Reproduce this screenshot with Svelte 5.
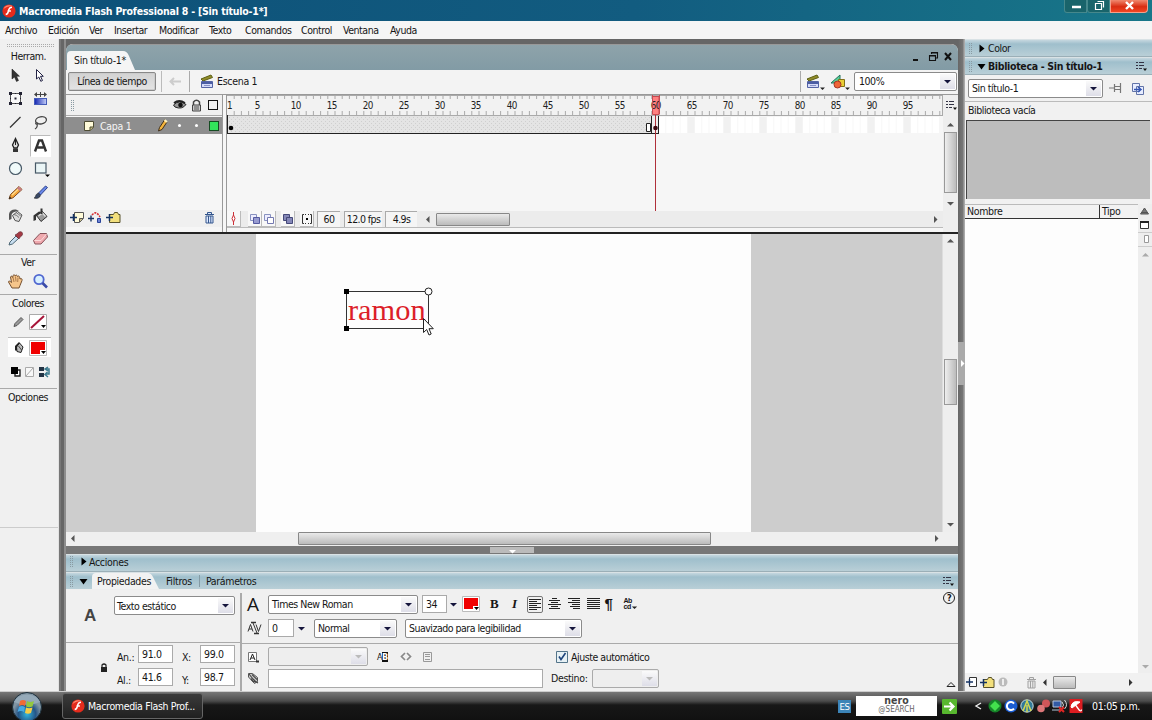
<script>
  const menus = ['Archivo', 'Edición', 'Ver', 'Insertar', 'Modificar', 'Texto', 'Comandos', 'Control', 'Ventana', 'Ayuda'];
  const tools = ['arrow', 'subarrow', 'transform', 'gradient', 'line', 'lasso', 'pen', 'text', 'oval', 'rect', 'pencil', 'brush', 'ink', 'bucket', 'dropper', 'eraser'];
  const alignLines = {
    left: 'M0 .5h12M0 2.500h8M0 4.500h12M0 6.500h8M0 8.500h12M0 10.500h8',
    center: 'M4 .5h5M1 2.500h11M3 4.500h7M0 6.500h13M3 8.500h7M1 10.500h11',
    right: 'M0 .5h12M4 2.500h8M0 4.500h12M4 6.500h8M2 8.500h10M5 10.500h7',
    justify: 'M0 .5h13M0 2.500h13M0 4.500h13M0 6.500h13M0 8.500h13M0 10.500h13'
  };
  const frameWidth = 7.2;
  const ticks = Array.from({ length: 99 }, (_, i) => (i + 1) * frameWidth);
  const labels = [1, ...Array.from({ length: 19 }, (_, i) => (i + 1) * 5)];
  const emptyFrames = Array.from({ length: 39 }, (_, i) => i + 61);
</script>

{#snippet icon(name)}
  {#if name === 'flash'}
    <svg width="14" height="14" viewBox="0 0 14 14"><circle cx="7" cy="7" r="6.6" fill="#e32b1c" /><path d="M1.500 5a6 5 0 0 1 9-3C7 2 4 3 1.500 5z" fill="#ff8a70" /><path d="M10 3.200c-3 0-3.200 2-3.700 4.300C6 9 5.500 10.300 3.700 10.600M5.500 6.900h3.400" fill="none" stroke="#fff" stroke-width="1.500" /></svg>
  {:else if name === 'arrow'}
    <svg width="17" height="17" viewBox="0 0 17 17"><path d="M5 2v10l2.500-2 2 4.500 2-1-2-4.300h3z" fill="#333" stroke="#111" stroke-width=".5" /></svg>
  {:else if name === 'subarrow'}
    <svg width="17" height="17" viewBox="0 0 17 17"><path d="M4.500 2.500v9.500l2.300-2 2 4.300 1.700-.8-2-4.200h2.800z" fill="#fff" stroke="#224" /></svg>
  {:else if name === 'transform'}
    <svg width="17" height="17" viewBox="0 0 17 17"><rect x="3.500" y="3.500" width="10" height="10" fill="#f8f8f8" stroke="#555" /><path d="M2 2h3v3H2zM8 3h1v1H8zM12 2h3v3h-3zM3 8h1v1H3zM13 8h1v1h-1zM2 12h3v3H2zM8 13h1v1H8zM12 12h3v3h-3zM7.500 7.500h2v2h-2z" fill="#223" /></svg>
  {:else if name === 'gradient'}
    <svg width="17" height="17" viewBox="0 0 17 17"><defs><linearGradient id="blue"><stop stop-color="#1224b0" /><stop offset="1" stop-color="#c5cff8" /></linearGradient></defs><path d="M2 4.500l3-2.500v5zM15 4.500L12 2v5zM5 4h7v1H5zM8 2h1v5H8z" fill="#444" /><rect x="2.500" y="8.500" width="12" height="6" fill="url(#blue)" stroke="#445bb8" /></svg>
  {:else if name === 'line'}
    <svg width="17" height="17" viewBox="0 0 17 17"><path d="M3 13.500L13.500 3" stroke="#333" stroke-width="1.300" /></svg>
  {:else if name === 'lasso'}
    <svg width="17" height="17" viewBox="0 0 17 17"><ellipse cx="9" cy="6.300" rx="5.500" ry="3.600" transform="rotate(-12 9 6.300)" fill="none" stroke="#444" stroke-width="1.300" /><path d="M4 8.500c-1.500 2 2.500 2.500 1.500 0M5 10c1 3-.5 4-2 5" fill="none" stroke="#444" stroke-width="1.200" /></svg>
  {:else if name === 'pen'}
    <svg width="17" height="17" viewBox="0 0 17 17"><path d="M8.500 1.500L5.500 8l1.500 3h3l1.500-3z" fill="#ddd" stroke="#222" stroke-width="1.300" /><path d="M8.500 3v5" stroke="#222" /><path d="M6 11.500h5V15H6z" fill="#333" /></svg>
  {:else if name === 'text'}
    <svg width="17" height="17" viewBox="0 0 17 17"><path d="M3 14.500L7 3.500h3l4 11M5.500 10.500h6" fill="none" stroke="#333" stroke-width="2.400" /></svg>
  {:else if name === 'oval'}
    <svg width="17" height="17" viewBox="0 0 17 17"><circle cx="8.500" cy="8.500" r="6" fill="#f0fafa" stroke="#465866" stroke-width="1.200" /></svg>
  {:else if name === 'rect'}
    <svg width="20" height="17" viewBox="0 0 20 17"><rect x="4.500" y="3" width="10.500" height="10" fill="#eaf5f6" stroke="#465866" stroke-width="1.200" /><path d="M14 14.500h5L16.500 17z" fill="#000" /></svg>
  {:else if name === 'pencil'}
    <svg width="17" height="17" viewBox="0 0 17 17"><path d="M2 15l1.500-4.500L12 2.500l3 3-9 8.300z" fill="#f4a43a" stroke="#7e4c22" /><path d="M5 11l8-7.500" stroke="#ffdf92" stroke-width="1.200" /><path d="M12 2.500l3 3-2 1.800-3-3z" fill="#c77e85" /><path d="M2 15l.8-2.400 1.700 1.700z" fill="#222" /></svg>
  {:else if name === 'brush'}
    <svg width="17" height="17" viewBox="0 0 17 17"><path d="M6.500 9L13.500 2l2 1.500-7 7.500z" fill="#6887e8" stroke="#2f438c" /><path d="M2 14c2-.500 1-4 4.500-5l2 2.200C8 14 5 15 2 14z" fill="#394966" stroke="#222" stroke-width=".6" /></svg>
  {:else if name === 'ink'}
    <svg width="17" height="17" viewBox="0 0 17 17"><path d="M5.500 8.500l5-4 4.500 3.500-3 6.500-4-1z" fill="#ddd" stroke="#555" /><path d="M2 13V7q1-5 7-4.500l3 1.500-3 .5Q5 5 4.500 8v4z" fill="#555" /><path d="M7 7.500q3 .5 5 3M9.500 6q2 .5 4 3" fill="none" stroke="#777" /></svg>
  {:else if name === 'bucket'}
    <svg width="17" height="17" viewBox="0 0 17 17"><path d="M4.500 8.500l6-4 4.500 5-6 5z" fill="#999" stroke="#333" /><path d="M6.500 9l4-3 3 3.500" fill="none" stroke="#ddd" stroke-width="1.300" /><path d="M1.500 14V8.500L7 4.500l2 .5-5 4.500V13zM8.500 1.500h2V7h-2z" fill="#333" /></svg>
  {:else if name === 'dropper'}
    <svg width="17" height="17" viewBox="0 0 17 17"><path d="M2 15l1-3 6-6 2.500 2.500-6 5.500z" fill="#c8def0" stroke="#4c6674" /><path d="M8 5l2-1c2-3 5-3 5.500-.500.300 2-1.500 3-2.500 3.500l-1 2z" fill="#a43a45" stroke="#642b34" stroke-width=".7" /></svg>
  {:else if name === 'eraser'}
    <svg width="17" height="17" viewBox="0 0 17 17"><path d="M1.500 10.500l6.500-7h6.500L15.500 7 9 14H3z" fill="#efa9ae" stroke="#87535a" /><path d="M2.500 10.500H9l5.500-6.500" fill="none" stroke="#fbd9da" /></svg>
  {:else if name === 'hand'}
    <svg width="17" height="17" viewBox="0 0 17 17"><path d="M5 15L1.500 9c0-1.500 1.500-1 3 .5L3.500 4c.5-1.300 1.700-1 2.200.500L6 2.500c.8-1 2-.7 2.200.500.700-1.500 2-1 2.300.500 1-1 2-.5 2.200 1L13 6c1.500-1 2.400 0 2 1.500L13 12.500 12 15z" fill="#f6c58a" stroke="#755030" /><path d="M6 4.500L7 9M8.500 3.500L9 8.500M11 4.500L10.700 9" stroke="#9b6a3e" stroke-width=".8" /></svg>
  {:else if name === 'zoom'}
    <svg width="17" height="17" viewBox="0 0 17 17"><circle cx="7" cy="6.500" r="4.700" fill="#d7f0ff" stroke="#5067d0" stroke-width="1.800" /><path d="M10.500 10l4.500 4.500" stroke="#3a4ba8" stroke-width="2.600" /></svg>
  {:else if name === 'stroke'}
    <svg width="17" height="17" viewBox="0 0 17 17"><path d="M6 13.500l1-3 6-6 2 2-6 6z" fill="#999" stroke="#555" /></svg>
  {:else if name === 'fill'}
    <svg width="17" height="17" viewBox="0 0 17 17"><path d="M8.500 8l3-4 3.500 4-2 5.500-4-1z" fill="#bbb" stroke="#222" /><path d="M7 11.500V7l4-4 1 1-3 3.500v4z" fill="#222" /><path d="M10.500 7l3 4" stroke="#444" /></svg>
  {:else if name === 'swapbw'}
    <svg width="12" height="12" viewBox="0 0 12 12"><path d="M5 4h5v6H5z" fill="#fff" stroke="#222" stroke-width="1.400" /><path d="M1 1h7v7H1z" /></svg>
  {:else if name === 'nocolor'}
    <svg width="12" height="12" viewBox="0 0 12 12"><path d="M1.500 1.500h8v9h-8zM2 10l7-8" fill="#f8f8f8" stroke="#aaa" /></svg>
  {:else if name === 'swap'}
    <svg width="14" height="12" viewBox="0 0 14 12"><path d="M1 1h5v4H1zM1 7h5v4H1z" fill="#234" /><path d="M7 3h4v5H8M10 1L7 3l3 2M9.500 6L7 8.500 10 11" fill="none" stroke="#3b7a8e" stroke-width="1.500" /></svg>
  {:else if name === 'scene'}
    <svg width="14" height="15" viewBox="0 0 14 15"><path d="M1 5L11 1l1.500 2.500L3 7z" fill="#928c2a" stroke="#5c6015" /><path d="M1.500 7.500h11v6h-11z" fill="#d4daf8" stroke="#5362a4" /><path d="M1.500 8h11v2h-11z" fill="#4b5da3" /><path d="M4 11.500h6" stroke="#8790c5" /></svg>
  {:else if name === 'symbols'}
    <svg width="17" height="15" viewBox="0 0 17 15"><path d="M1 9l9-8v8z" fill="#58cf98" stroke="#24735b" /><path d="M8.500 5.500h6v7h-6z" fill="#e9cd35" stroke="#817019" /><circle cx="7.500" cy="10.500" r="3.500" fill="#ef6738" stroke="#a33525" /></svg>
  {:else if name === 'eye'}
    <svg width="14" height="10" viewBox="0 0 14 10"><path d="M.5 5Q6-1 13 4.500 9 10 2 7z" fill="#999" stroke="#222" /><path d="M1 3Q6-1 12 3" fill="none" stroke="#222" stroke-width="1.800" /><circle cx="7.500" cy="5" r="2.300" fill="#111" /></svg>
  {:else if name === 'lock'}
    <svg width="11" height="13" viewBox="0 0 11 13"><path d="M2.500 6V3q3-3.500 6 0v3" fill="#eee" stroke="#444" stroke-width="1.500" /><path d="M1.500 6h8v6h-8z" fill="#ccc" stroke="#444" /><path d="M3 8h5M3 10h5" stroke="#555" /></svg>
  {:else if name === 'minilock'}
    <svg width="8" height="9" viewBox="0 0 8 9"><path d="M2 4V2q2-2 4 0v2" fill="none" stroke="#222" stroke-width="1.200" /><path d="M1 4h6v5H1z" fill="#222" /></svg>
  {:else if name === 'page'}
    <svg width="12" height="12" viewBox="0 0 12 12"><path d="M1.500 1.500h9v6l-3.500 3h-5.500z" fill="#fffbd9" stroke="#4e4c34" /><path d="M7 10.500V7h3.500" fill="#bbb27d" stroke="#4e4c34" /></svg>
  {:else if name === 'minipencil'}
    <svg width="11" height="13" viewBox="0 0 11 13"><path d="M1.500 12L2.500 8.500 7.500 1l2.500 2-5 7.500z" fill="#f2b33c" stroke="#40301c" /><path d="M7.500 1l2.500 2" stroke="#fff4be" stroke-width="2" /></svg>
  {:else if name === 'addlayer'}
    <svg width="15" height="13" viewBox="0 0 15 13"><path d="M4.500 1.500h9v6l-4 4h-5z" fill="#fffbd9" stroke="#555" /><path d="M9.500 11V7.500H13" fill="#c4bc8a" stroke="#555" /><path d="M0 6.500h7M3.500 3v7" stroke="#143262" stroke-width="1.500" /></svg>
  {:else if name === 'guide'}
    <svg width="15" height="13" viewBox="0 0 15 13"><path d="M4 4q4-5 8 2" fill="none" stroke="#d52c32" stroke-width="1.600" stroke-dasharray="2 1" /><path d="M0 7.500h6M3 4.500v6" stroke="#143262" stroke-width="1.400" /><path d="M9.500 7.500h3v4h-3z" fill="#6f84d3" stroke="#28439b" /></svg>
  {:else if name === 'addfolder'}
    <svg width="15" height="13" viewBox="0 0 15 13"><path d="M3.500 3.500h4l1-2h3l1 2h1.500v8H3.500z" fill="#f2df7c" stroke="#57502a" /><path d="M0 6.500h7M3.500 3v7" stroke="#143262" stroke-width="1.500" /></svg>
  {:else if name === 'trash'}
    <svg width="11" height="13" viewBox="0 0 11 13"><path d="M1 3.500h9M3.500 3V1.500h4V3M2 5h7v7H2zM4.500 5v7M6.800 5v7" fill="#dce8ff" stroke="#34568d" /></svg>
  {:else if name === 'onion'}
    <svg width="12" height="12" viewBox="0 0 12 12"><path d="M1.500 1.500h6v6h-6z" fill="#eef" stroke="#8992c0" /><path d="M4.500 4.500h6v6h-6z" fill="#979bd0" stroke="#5459a0" /></svg>
  {:else if name === 'onionoutline'}
    <svg width="12" height="12" viewBox="0 0 12 12"><path d="M1.500 1.500h6v6h-6z" fill="#eef" stroke="#8992c0" /><path d="M4.500 4.500h6v6h-6z" fill="#fff" stroke="#7479b0" /></svg>
  {:else if name === 'multiframe'}
    <svg width="12" height="12" viewBox="0 0 12 12"><path d="M1.500 1.500h6v6h-6z" fill="#8588b8" stroke="#454979" /><path d="M4.500 4.500h6v6h-6z" fill="#8588b8" stroke="#454979" /></svg>
  {:else if name === 'markers'}
    <svg width="12" height="12" viewBox="0 0 12 12"><path d="M3 1.500H1.500v9H3M9 1.500h1.500v9H9M4 1.500h1M7 1.500h1M4 10.500h1M7 10.500h1" fill="none" stroke="#333" /><path d="M5 5h2v2H5z" /></svg>
  {:else if name === 'centerframe'}
    <svg width="9" height="13" viewBox="0 0 9 13"><path d="M4.500 0v4M4.500 9v4" stroke="#cc3038" /><path d="M4.500 3L6 6.500 4.500 10 3 6.500z" fill="#fff" stroke="#cc3038" /></svg>
  {:else if name === 'options'}
    <svg width="12" height="11" viewBox="0 0 12 11"><path d="M1 1.500h2M4 1.500h5M1 4.500h2M4 4.500h5M1 7.500h2M4 7.500h3" stroke="#334" /><path d="M8 7.500h4L10 10z" fill="#111" /></svg>
  {:else if alignLines[name]}
    <svg width="13" height="12" viewBox="0 0 13 12"><path d={alignLines[name]} stroke="#222" /></svg>
  {:else if name === 'tracking'}
    <svg width="15" height="16" viewBox="0 0 15 16"><path d="M1 11.500l2.500-7 2.500 7M2 9h3M9 4.500l2.500 7 2.500-7M6 3l4 10" fill="none" stroke="#333" /><path d="M4 2.500h5M7 13.500h5" stroke="#333" stroke-width="1.400" /></svg>
  {:else if name === 'charposition'}
    <svg width="12" height="12" viewBox="0 0 12 12"><path d="M1.500 1.500h8v9h-8z" fill="#fff" stroke="#777" /><path d="M3 9l2.500-6L8 9M4 7h3" fill="none" stroke="#222" /><path d="M9 9.500h3v2H9z" fill="#333" /></svg>
  {:else if name === 'link'}
    <svg width="13" height="13" viewBox="0 0 13 13"><path d="M1.500 5V1.500h4l5 4v4l-3 2z" fill="#ccc" stroke="#555" /><path d="M2 2l4 5q3 3 5 4M5 2.500l5 5M4 6.500q2 4 5 3.500" fill="none" stroke="#444" stroke-width="1.100" /></svg>
  {:else if name === 'code'}
    <svg width="12" height="9" viewBox="0 0 12 9"><path d="M5 1L1.500 4.500 5 8M7 1l3.500 3.500L7 8" fill="none" stroke="#888" stroke-width="1.700" /></svg>
  {:else if name === 'border'}
    <svg width="11" height="12" viewBox="0 0 11 12"><path d="M1.500 1.500h8v9h-8zM3 3.500h5M3 5.500h5M3 8.500h5" fill="none" stroke="#999" /></svg>
  {:else if name === 'pin'}
    <svg width="14" height="12" viewBox="0 0 14 12"><path d="M0 6h5M5.500 2v8M6 4.500h5M6 7.500h5M11.500 1v10" stroke="#777" stroke-width="1.200" /></svg>
  {:else if name === 'newlib'}
    <svg width="14" height="13" viewBox="0 0 14 13"><path d="M1.500 1.500h7v8h-7zM5.500 4.500h7v8h-7z" fill="#e7edff" stroke="#6274a8" /><path d="M3 7.500h6M7 5l3 2.500L7 10" fill="none" stroke="#3355b4" stroke-width="1.500" /></svg>
  {:else if name === 'newsymbol'}
    <svg width="12" height="12" viewBox="0 0 12 12"><path d="M3.500 1.500h7v9h-7z" fill="#fff" stroke="#333" /><path d="M0 6h7M3.500 3v6" fill="none" stroke="#143262" stroke-width="1.300" /></svg>
  {/if}
{/snippet}

{#snippet tri(dir, color = '#222')}
  <svg class="tri" width="9" height="9" viewBox="0 0 9 9"><path d={dir === 'down' ? 'M1 3h7L4.500 6.500z' : dir === 'up' ? 'M1 6.500h7L4.500 3z' : dir === 'left' ? 'M6.500 1v7L3 4.500z' : 'M3 1v7l3.500-3.500z'} fill={color} /></svg>
{/snippet}

{#snippet panelTri(dir)}
  <svg width="9" height="9" viewBox="0 0 9 9"><path d={dir === 'down' ? 'M.5 2h8L4.500 7.500z' : 'M2.500 .5v8L7.500 4.500z'} /></svg>
{/snippet}

{#snippet select(text, cls = '')}
  <div class="select {cls}"><span>{text}</span><i>{@render tri('down', cls.includes('off') ? '#bbb' : '#15153c')}</i></div>
{/snippet}

<div class="app">
  <header class="title">{@render icon('flash')}<b>Macromedia Flash Professional 8 - [Sin título-1*]</b>
    <div class="winbtns"><span><svg width="22" height="13"><path d="M7 7h9" stroke="#fff" stroke-width="2.500" /></svg></span><span><svg width="22" height="13"><path d="M7.500 3.500h6v6h-6zM9.500 1.500h6v6" fill="none" stroke="#fff" stroke-width="1.200" /></svg></span><span class="close"><svg width="36" height="13"><path d="M15 2l7 7M22 2l-7 7" stroke="#fff" stroke-width="2.400" /></svg></span></div>
  </header>
  <nav>{#each menus as m}<span>{m}</span>{/each}</nav>

  <main>
    <aside class="toolbox">
      <div class="dots"></div>
      <div class="cap">Herram.</div>
      <div class="tools">{#each tools as t}<div class:active={t === 'text'}>{@render icon(t)}</div>{/each}</div>
      <div class="cap sep ver">Ver</div>
      <div class="tools view"><div>{@render icon('hand')}</div><div>{@render icon('zoom')}</div></div>
      <div class="cap sep col">Colores</div>
      <div class="swrow"><div>{@render icon('stroke')}</div><svg width="18" height="16"><path d="M.5.5h17v15H.5z" fill="#fff" stroke="#aaa" /><path d="M2 14L15 2" stroke="#a71438" stroke-width="2" /><path d="M12 11h5l-2.500 3z" /></svg></div>
      <div class="swrow on"><div>{@render icon('fill')}</div><svg width="18" height="16"><path d="M.5.5h17v15H.5z" fill="#fff" stroke="#bbb" /><path d="M2 2h14v12H2z" fill="#f00000" /><path d="M11 10h6v5h-6z" fill="#fff" /><path d="M12 11h5l-2.500 3z" /></svg></div>
      <div class="swaps">{@render icon('swapbw')}{@render icon('nocolor')}{@render icon('swap')}</div>
      <div class="cap sep opt">Opciones</div>
      <div class="rest"></div>
    </aside>
    <div class="split"></div>

    <section class="center">
      <div class="doc">
        <div class="tabs"><span class="tab"><svg width="70" height="19"><path d="M0 19V4q0-4 4-4h52q4 0 6 5l6 14z" fill="#f5f5f5" /></svg><em>Sin título-1*</em></span>
          <svg class="docbtns" width="42" height="14"><path d="M2 10h5" stroke="#111" stroke-width="2" /><path d="M18.500 5.500h6v5h-6zM18 6h7M20.500 4V2.500h6V8H25M20 3h7" fill="none" stroke="#111" stroke-width="1.100" /><path d="M34 3l6 7M40 3l-6 7" stroke="#111" stroke-width="2" /></svg>
        </div>
        <div class="editbar"><span class="btn">Línea de tiempo</span><span class="back"><svg width="12" height="9"><path d="M12 4.500H3M5 1L1.500 4.500 5 8" fill="none" stroke="#ccc" stroke-width="2" /></svg></span><span class="scene">{@render icon('scene')}Escena 1</span><span class="grow"></span><span class="pick">{@render icon('scene')}<small>{@render tri('down')}</small></span><span class="pick two">{@render icon('symbols')}<small>{@render tri('down')}</small></span>{@render select('100%', 'zoomsel')}</div>

        <div class="timeline">
          <div class="layers">
            <div class="lhead"><i class="grip"></i><span>{@render icon('eye')}</span><span>{@render icon('lock')}</span><b class="sq"></b></div>
            <div class="layer">{@render icon('page')}<span>Capa 1</span>{@render icon('minipencil')}<u class="first"></u><u></u><b></b></div>
            <div class="lspace"></div>
            <div class="lfoot">{@render icon('addlayer')}{@render icon('guide')}{@render icon('addfolder')}<span></span>{@render icon('trash')}</div>
          </div>
          <div class="frames">
            <svg class="ruler" width="716" height="116" viewBox="0 0 716 116">
              <defs><pattern id="tween" width="4" height="4" patternUnits="userSpaceOnUse"><path d="M0 0h4v4H0z" fill="#e4e4e4" /><path d="M0 0h1v1H0zM2 2h1v1H2z" fill="#cfcfcf" /></pattern></defs>
              <path d="M0 0h716v20H0z" fill="#f2f2f2" />
              {#each ticks as x}<path d="M{x} 1v3M{x} 16v4" stroke="#aaa" />{/each}
              <path d="M0 .5h716M0 20.500h716M715.500 0v20" stroke="#aaa" />
              {#each emptyFrames as n}<path d="M{(n - 1) * frameWidth} 22h6.400v16h-6.400z" fill={n % 5 ? '#fff' : '#f1f1f1'} />{/each}
              <path d="M0 21h425v17H0z" fill="url(#tween)" /><path d="M0 38.500h432M.5 20v18M424.500 21v18M431.500 21v18" stroke="#222" />
              <path d="M425 21h6v17h-6z" fill="#eee" />
              <circle cx="4" cy="33" r="2.300" /><path d="M419.500 28.500h4v8h-4z" fill="#fff" stroke="#222" />
              <path d="M425.500 1.500h6.500v18h-6.500z" fill="#ff8080" stroke="#c64a50" />
              {#each labels as n}<text x={(n - 1) * frameWidth - (n === 1 ? 0 : 1)} y="13.500">{n}</text>{/each}
              <path d="M425 0h1v19h-1M432 0h1v19h-1" fill="#c64a50" /><path d="M428.500 20v96" stroke="#b0303a" /><circle cx="428.500" cy="33" r="2.300" fill="#3c0a10" />
            </svg>
            <div class="fstatus"><span class="fb first">{@render icon('centerframe')}</span><span class="fb on1">{@render icon('onion')}</span><span class="fb on2">{@render icon('onionoutline')}</span><span class="fb on3">{@render icon('multiframe')}</span><span class="fb on4">{@render icon('markers')}</span><span class="fv v1">60</span><span class="fv v2">12.0 fps</span><span class="fv v3">4.9s</span><div class="hs">{@render tri('left', '#555')}<i></i><span class="grow"></span>{@render tri('right', '#555')}</div></div>
          </div>
          <div class="tscroll"><span>{@render icon('options')}</span>{@render tri('up', '#555')}<i></i>{@render tri('down', '#555')}</div>
        </div>

        <div class="work">
          <div class="pasteboard"><div class="page"><div class="textbox">ramon<svg width="92" height="52" viewBox="0 0 92 52"><path d="M3.500 4.500h82v37h-82z" fill="none" stroke="#333" /><path d="M1 2h5v5H1zM1 39h5v5H1z" /><circle cx="85.500" cy="4.500" r="3.500" fill="#fff" stroke="#222" /><path d="M80.500 31.500v14l3.200-3 2.300 5.500 2.200-1-2.200-5.300h4.300z" fill="#fff" stroke="#222" /></svg></div></div></div>
          <div class="vs">{@render tri('up', '#555')}<span></span><i></i><span class="grow"></span>{@render tri('down', '#555')}</div>
        </div>
        <div class="hscroll">{@render tri('left', '#555')}<i></i><span class="grow"></span>{@render tri('right', '#555')}</div>
      </div>
      <div class="collapse"><span>{@render tri('down', '#fff')}</span></div>

      <div class="props">
        <div class="bar acc"><i class="grip"></i>{@render panelTri('right')}<span>Acciones</span></div>
        <div class="bar ptabs"><i class="grip"></i>{@render panelTri('down')}<span class="ptab"><svg width="68" height="17"><path d="M0 17V5q0-4 4-4h52q3 0 5 4l6 12z" fill="#f2f2f2" /></svg><em>Propiedades</em></span><span class="t2">Filtros</span><span class="t3">Parámetros</span><span class="grow"></span>{@render icon('options')}</div>
        <div class="pbody">
          <div class="pleft">
            <div class="kind"><b>A</b>{@render select('Texto estático', 'kindsel')}</div>
            <div class="dims"><span class="lk">{@render icon('minilock')}</span><label>An.:</label><div class="inp">91.0</div><label>X:</label><div class="inp">99.0</div><label>Al.:</label><div class="inp">41.6</div><label>Y:</label><div class="inp">98.7</div></div>
          </div>
          <div class="pright">
            <div class="r r1"><span class="bigA">A</span>{@render select('Times New Roman', 'font')}<div class="inp sz">34</div><span class="ar">{@render tri('down', '#15153c')}</span><svg class="red" width="18" height="16"><path d="M.5.5h17v15H.5z" fill="#fff" stroke="#bbb" /><path d="M2 2h14v11H2z" fill="#f00000" /><path d="M11 10h6v5h-6z" fill="#fff" /><path d="M12 11h5l-2.500 3z" /></svg><b class="bi">B</b><b class="bi it">I</b><span class="al sel">{@render icon('left')}</span><span class="al">{@render icon('center')}</span><span class="al">{@render icon('right')}</span><span class="al">{@render icon('justify')}</span><span class="pil">¶</span><span class="abcd">Ab<br />cd</span><span class="abtri">{@render tri('down')}</span><span class="grow"></span><span class="help">?</span></div>
            <div class="r r2"><span class="ic">{@render icon('tracking')}</span><div class="inp tr">0</div><span class="ar">{@render tri('down', '#15153c')}</span>{@render select('Normal', 'normal')}{@render select('Suavizado para legibilidad', 'aa')}</div>
            <div class="r r3"><span class="ic">{@render icon('charposition')}</span>{@render select('', 'off lines')}<span class="sel2">A<b>B</b></span><span class="cd">{@render icon('code')}</span><span class="bd">{@render icon('border')}</span><svg class="chk" width="12" height="12"><path d="M.5.5h11v11H.5z" fill="#e7f1f5" stroke="#54758a" /><path d="M3 5.500l2 3L9.500 2" fill="none" stroke="#1e447c" stroke-width="1.600" /></svg><span>Ajuste automático</span></div>
            <div class="r r4"><span class="ic">{@render icon('link')}</span><div class="inp url"></div><span class="dest">Destino:</span>{@render select('', 'off target')}<span class="grow"></span><svg class="exp" width="10" height="7"><path d="M1 5.500h8L5 1.500z" fill="none" stroke="#222" /></svg></div>
          </div>
        </div>
      </div>
    </section>
    <div class="split2"><span>{@render tri('right', '#fff')}</span></div>

    <aside class="library">
      <div class="bar colr"><i class="grip"></i>{@render panelTri('right')}<span>Color</span></div>
      <div class="bar lib"><i class="grip"></i>{@render panelTri('down')}<b>Biblioteca - Sin título-1</b><span class="grow"></span>{@render icon('options')}</div>
      <div class="libsel">{@render select('Sin título-1', 'lsel')}<span>{@render icon('pin')}</span><span>{@render icon('newlib')}</span></div>
      <div class="empty">Biblioteca vacía</div>
      <div class="preview"></div>
      <div class="list">
        <div class="listmain"><div class="lh"><span>Nombre</span><span>Tipo</span></div></div>
        <div class="lscroll"><svg width="14" height="46"><path d="M2.500 10h8l-4-6zM4 8.500h5" fill="#777" stroke="#555" /><path d="M2.500 17.500h8v7h-8z" fill="#fff" stroke="#333" /><path d="M2 18h9" stroke="#222" stroke-width="2" /><path d="M6.500 31.500h4v7h-4z" fill="#fff" stroke="#999" /><path d="M0 28.500h14M0 42.500h14" stroke="#ccc" /></svg>{@render tri('up', '#aaa')}<span class="grow"></span>{@render tri('down', '#aaa')}</div>
      </div>
      <div class="libfoot">{@render icon('newsymbol')}{@render icon('addfolder')}<svg width="12" height="12"><circle cx="6" cy="6" r="4.500" fill="#bbb" /><path d="M6 3v6" stroke="#fff" stroke-width="1.500" /></svg><span class="gray">{@render icon('trash')}</span>{@render tri('left', '#333')}<i></i><span class="grow"></span>{@render tri('right', '#333')}</div>
    </aside>
  </main>

  <footer>
    <svg class="orb" width="32" height="28" viewBox="0 0 32 28"><defs><radialGradient id="orb" cx=".5" cy=".75"><stop stop-color="#32b5df" /><stop offset=".6" stop-color="#245587" /><stop offset="1" stop-color="#8195a3" /></radialGradient></defs><circle cx="16" cy="15" r="14.500" fill="url(#orb)" stroke="#1d303c" /><path d="M3 10a14 12 0 0 1 26 0Q16 16 3 10z" fill="#9fb6c4" opacity=".65" /><path d="M9 9q3-2 6 0l-1 5q-3-2-6 0z" fill="#f26a35" /><path d="M16 9q3 2 7 0l-1.500 5.500q-3.500 1.500-6.500 0z" fill="#94c83d" /><path d="M8 15q3-2 6 0l-1 5q-3-2-6.500 0z" fill="#45a9e5" /><path d="M15 15.500q3 1.500 6.500 0L20 21q-3 1.500-6 0z" fill="#f7cd45" /></svg>
    <div class="task">{@render icon('flash')}<span>Macromedia Flash Prof...</span></div>
    <span class="grow"></span>
    <span class="es">ES</span>
    <span class="nero"><b>nero</b><em>@SEARCH</em></span>
    <svg class="go" width="15" height="15"><rect width="15" height="15" rx="1" fill="#58b72f" /><path d="M2 7.500h9M7.500 3.500l4 4-4 4" fill="none" stroke="#fff" stroke-width="2.200" /></svg>
    <svg class="tray" width="118" height="16" viewBox="0 0 118 16"><path d="M12 5L7 8l5 3" fill="none" stroke="#eee" stroke-width="1.400" /><circle cx="26" cy="8" r="6.500" fill="#168329" /><path d="M26 3l5 5-5 5-5-5z" fill="#43e14d" /><circle cx="42" cy="8" r="6.500" fill="#1b5dd2" /><path d="M45 5.500a4 4 0 1 0 0 5" fill="none" stroke="#fff" stroke-width="2" /><circle cx="58" cy="8" r="6.200" fill="#317998" stroke="#cadde0" /><path d="M54 13l4-10 4 10M58 7v7" fill="none" stroke="#d5d850" stroke-width="1.500" /><circle cx="77" cy="5.500" r="4" fill="#cf5659" /><circle cx="72" cy="10.500" r="3.800" fill="#dc7779" /><path d="M84 3h8v6h-8zM83 12h8" fill="#335ba5" stroke="#b7c7dd" /><path d="M93 4q3 3 0 6M95.500 2q4 5 0 9" fill="none" stroke="#ddd" /><path d="M90 9l5 5M95 9l-5 5" stroke="#e02523" stroke-width="2" /><path d="M100.500 1h13v14h-13z" fill="#dc1d21" /><path d="M102 9q1-7 9-5l-8 6z" fill="#fff" stroke="#fff" /><path d="M106.500 7l4 5.500q2 1 2-1" fill="none" stroke="#fff" stroke-width="1.300" /></svg>
    <time>01:05 p.m.</time>
  </footer>
</div>

<style>
  :global(body) { margin: 0; overflow: hidden; }
  .app { width: 1152px; height: 720px; display: flex; flex-direction: column; background: #f0f0f0; font: 10.5px/14px "DejaVu Sans Condensed", "DejaVu Sans", sans-serif; font-stretch: condensed; letter-spacing: -.45px; color: #161616; white-space: nowrap; }
  .app * { box-sizing: border-box; }
  svg { display: block; flex: none; }
  i, em { font-style: normal; }
  .grow { flex: 1; }
  .title { height: 21px; background: linear-gradient(90deg, #0d5078, #125c80 55%, #187789); color: #fff; display: flex; align-items: center; padding: 0 4px 0 2px; flex: none; }
  .title b { margin-left: 3px; font-size: 10.500px; letter-spacing: -.22px; }
  .winbtns { display: flex; margin-left: auto; align-self: flex-start; }
  .winbtns span { width: 23px; height: 13px; background: #19646b; border: 1px solid #46888c; border-top: 0; border-radius: 0 0 0 3px; overflow: hidden; }
  .winbtns .close { width: 38px; background: linear-gradient(#f08a70, #d92d12 55%, #f04623); border-color: #f3a08b; border-radius: 0 0 4px 0; }
  nav { height: 18px; display: grid; grid-template-columns: 43px 41px 25px 45px 50px 36px 56px 42px 47px 40px; padding: 2px 0 0 5px; background: #f5f5f5; flex: none; }
  main { height: 652px; display: grid; grid-template-columns: 58px 8px 892px 7px 187px; background: #666; flex: none; }
  .toolbox { background: #f0f0f0; display: flex; flex-direction: column; min-height: 0; }
  .dots { margin: 5px 4px 0 6px; height: 4px; background: conic-gradient(#aaa 25%, transparent 0) 0 0/2px 2px; }
  .cap { height: 14px; text-align: center; padding-right: 1px; margin-top: 2px; }
  .dots + .cap { margin-top: 1px; margin-bottom: 1px; }
  .tools { display: grid; grid-template-columns: 25px 25px; grid-auto-rows: 23.300px; padding-left: 3px; }
  .tools div { display: grid; place-items: center; }
  .tools .active { background: #fff; border: 1px solid #ccc; border-color: #bbb #fff #fff #bbb; height: 22px; margin: 1px 2px; }
  .sep { border-top: 1px solid #aaa; width: 57px; }
  .ver { margin-top: 4px; height: 16px; line-height: 15px; }
  .view { grid-auto-rows: 24px; margin-top: -1px; padding-bottom: 1px; }
  .col { margin-top: 0; height: 18px; line-height: 17px; }
  .swrow { display: flex; height: 19px; margin: 0 7px 0 8px; align-items: center; gap: 4px; }
  .swrow.on { background: #fff; margin-top: 6px; border-top: 1px solid #bbb; height: 20px; }
  .swrow div { width: 17px; }
  .swaps { display: flex; gap: 2px; padding: 9px 0 0 10px; height: 31px; }
  .opt { margin-top: 0; height: 18px; line-height: 16px; }
  .rest { height: 122px; border-bottom: 1px solid #ccc; }
  .split { background: linear-gradient(90deg, #e3e3e3 0 1px, #777 1px 3px, #666 3px 6px, #8d8d8d 6px); }
  .center { display: flex; flex-direction: column; padding-top: 5px; min-width: 0; }
  .doc { height: 503px; display: flex; flex-direction: column; background: #f4f4f4; border-radius: 7px 7px 0 0; overflow: hidden; flex: none; border-bottom: 1px solid #777; }
  .tabs { height: 26px; background: linear-gradient(#8ea3aa, #829ba5); display: flex; align-items: flex-end; border-top: 1px solid #999; flex: none; }
  .tab, .ptab { position: relative; }
  .tab { margin-left: 1px; }
  .tab em { position: absolute; left: 7px; top: 2px; letter-spacing: -.35px; }
  .docbtns { margin: 0 5px 6px auto; }
  .editbar { height: 25px; display: flex; align-items: center; padding: 0 1px 2px 2px; border-bottom: 1px solid #999; flex: none; background: #f3f3f3; }
  .btn { width: 88px; height: 19px; border: 1px solid #888; border-radius: 2px; background: linear-gradient(#d2d2d2, #e4e4e4); text-align: center; line-height: 17px; box-shadow: inset 0 0 0 1px #ccc; }
  .back { margin-left: 5px; border-left: 1px solid #bbb; padding: 6px 0 6px 7px; width: 29px; border-right: 1px solid #aaa; }
  .scene { display: flex; align-items: center; gap: 3px; margin-left: 10px; letter-spacing: -.3px; }
  .pick { position: relative; width: 26px; padding: 3px 5px; }
  .pick:not(.two) { border-left: 1px solid #aaa; }
  .pick small { position: absolute; right: -1px; bottom: -1px; transform: scale(.7); }
  .pick.two { margin-right: 3px; width: 25px; padding-left: 4px; }
  .select { display: flex; align-items: center; height: 19px; border: 1px solid #8b8b8b; border-radius: 2px; background: #fff; padding-left: 3px; flex: none; }
  .select i { margin-left: auto; width: 15px; height: 15px; display: grid; place-items: center; background: linear-gradient(#fafafa, #dedee8); margin-right: 1px; }
  .off { background: #eee; border-color: #aaa; }
  .zoomsel { width: 103px; padding-left: 4px; }
  .timeline { height: 137px; display: grid; grid-template-columns: 160px 717px 15px; flex: none; background: #f6f6f6; }
  .layers { border-right: 1px solid #999; display: flex; flex-direction: column; width: 157px; }
  .lhead { height: 21px; border-bottom: 1px solid #aaa; background: #f0f0f0; display: flex; align-items: center; }
  .grip { width: 4px; height: 11px; background: conic-gradient(#899aa2 25%, transparent 0) 0 0/2px 2px; display: block; }
  .lhead .grip { margin: 0 99px 0 4px; }
  .lhead span { width: 18px; }
  .lhead .sq { width: 10px; height: 10px; border: 2px solid #111; margin-left: -1px; border-width: 1.500px; }
  .layer { height: 17px; margin: 1px 0 0; background: #8e8e8e; color: #f5f5f5; display: flex; align-items: center; padding-left: 17px; flex: none; }
  .layer span { width: 57px; margin-left: 5px; letter-spacing: -.3px; }
  .layer u { width: 3px; height: 3px; background: #fff; border-radius: 50%; margin: 0 7px; }
  .layer u.first { margin-left: 10px; }
  .layer b { width: 10px; height: 10px; background: #32e45b; border: 1px solid #154c22; margin-left: 4px; }
  .lspace { flex: 1; }
  .lfoot { height: 17px; margin-bottom: 5px; padding: 1px 7px 0 4px; display: flex; gap: 3px; background: #f0f0f0; }
  .lfoot span { flex: 1; }
  .frames { border-left: 1px solid #999; display: flex; flex-direction: column; min-width: 0; }
  .ruler text { font: 9.800px "DejaVu Sans Condensed", sans-serif; letter-spacing: -.6px; fill: #222; }
  .fstatus { height: 17px; display: flex; border-bottom: 1px solid #bbb; background: #ececec; }
  .fb { height: 16px; width: 14px; display: grid; place-items: center; border-right: 1px solid #bbb; border-bottom: 1px solid #bbb; background: #f8f8f8; }
  .on1 { margin-left: 7px; } .on3 { margin-left: 5px; } .on4 { margin-left: 5px; }
  .fv { border: 1px solid #aaa; border-width: 1px 0 0 1px; height: 16px; text-align: center; background: #f5f5f5; line-height: 15px; letter-spacing: -.6px; }
  .v1 { width: 23px; margin-left: 3px; } .v2 { width: 38px; margin-left: 4px; } .v3 { width: 32px; margin-left: 3px; }
  .hs { flex: 1; display: flex; align-items: center; margin-left: 4px; padding-right: 3px; padding-left: 2px; }
  .hs i { width: 74px; margin-left: 4px; }
  .hs i, .hscroll i, .libfoot i { height: 13px; border: 1px solid #888; border-radius: 1px; background: linear-gradient(#eaeaea, #bbb); }
  .tscroll { display: flex; flex-direction: column; align-items: center; padding-top: 5px; background: #eee; }
  .tscroll span { height: 20px; }
  .tscroll i { width: 13px; height: 61px; margin: 3px 0 6px; }
  .tscroll i, .vs i { border: 1px solid #999; background: linear-gradient(90deg, #eee, #bbb); flex: none; }
  .work { height: 300px; border-top: 2px solid #222; display: flex; flex: none; }
  .pasteboard { width: 877px; background: #cdcdcd; padding-left: 190px; border-right: 1px solid #ddd; }
  .page { width: 495px; height: 100%; background: #fdfdfd; padding: 52px 0 0 87px; }
  .textbox { width: 90px; height: 46px; position: relative; font: 30.400px/48px "Liberation Serif", serif; color: #dc1e28; padding-left: 5px; letter-spacing: 0; }
  .textbox svg { position: absolute; left: 0; top: 1px; }
  .vs { width: 15px; display: flex; flex-direction: column; align-items: center; padding: 2px 0 3px; background: #eee; }
  .vs span:first-of-type { height: 114px; }
  .vs i { width: 13px; height: 46px; }
  .hscroll { height: 14px; display: flex; align-items: center; padding: 0 17px 1px 2px; background: #efefef; flex: none; }
  .hscroll i { margin-left: 221px; width: 413px; }
  .collapse { height: 7px; background: #777; display: flex; justify-content: center; flex: none; }
  .collapse span { width: 44px; height: 6px; background: #bbb; display: grid; place-items: center; }
  .props { height: 137px; background: #f0f0f0; flex: none; }
  .bar { display: flex; align-items: center; background: linear-gradient(#c5d7df, #9fbfcc 25%, #b9cfd7); border-top: 1px solid #d9e2e5; border-bottom: 1px solid #9bafb7; }
  .bar .grip { margin: 0 6px 0 3px; }
  .bar .grip + :global(svg) { margin-right: 2px; }
  .acc { height: 18px; padding-bottom: 3px; }
  .acc > span { margin-left: -1px; letter-spacing: -.3px; }
  .ptabs { height: 17px; border-bottom: 0; padding-right: 4px; }
  .ptab { align-self: flex-end; margin-left: 2px; }
  .ptab em { position: absolute; left: 5px; top: 2px; letter-spacing: -.35px; }
  .t2 { margin-left: 6px; width: 34px; border-right: 1px solid #849aa4; height: 12px; line-height: 13px; letter-spacing: -.3px; }
  .t3 { margin-left: 6px; line-height: 15px; letter-spacing: -.35px; }
  .pbody { display: grid; grid-template-columns: 176px 716px; height: 102px; border-top: 1px solid #eee; }
  .pleft { border-right: 2px solid #aaa; margin-top: 3px; }
  .kind { display: flex; height: 50px; border-bottom: 1px solid #aaa; padding-top: 3px; }
  .kind b { width: 30px; margin: 10px 0 0 18px; font: bold 17px/20px "Liberation Sans", sans-serif; color: #444; }
  .kindsel { width: 121px; padding-left: 2px; }
  .dims { position: relative; display: grid; grid-template-columns: 21px 44px 18px 34px; grid-auto-rows: 23px; margin: 2px 0 0 51px; letter-spacing: -.35px; }
  .dims label { padding-top: 5px; }
  .lk { position: absolute; left: -17px; top: 18px; }
  .inp { background: #fff; border: 1px solid #aaa; height: 18px; width: 35px; padding-left: 3px; line-height: 16px; }
  .pright { padding-top: 2px; }
  .r { display: flex; align-items: center; height: 24px; padding-left: 5px; }
  .r2 { height: 24px; }
  .r3 { border-top: 1px solid #aaa; margin-top: 3px; height: 24px; padding-top: 2px; }
  .r4 { height: 22px; padding-top: 2px; padding-bottom: 2px; }
  .bigA { width: 21px; font: 19px/20px "Open Sans", sans-serif; }
  .ic { width: 21px; }
  .font { width: 150px; }
  .sz { width: 25px; margin-left: 4px; }
  .ar { width: 11px; margin-left: 2px; }
  .red { margin-left: 2px; }
  .bi { font: bold 13px/16px "Liberation Serif", serif; margin-left: 10px; width: 11px; }
  .it { font-style: italic; margin-left: 11px; width: 10px; }
  .al { width: 19.500px; height: 17px; padding: 2px 3px; }
  .sel { border: 1px solid #777; padding: 2px 1px; width: 16px; margin-right: 2px; margin-left: 5px; border-radius: 2px; }
  .pil { font: bold 15px/16px "Liberation Sans", sans-serif; width: 19px; margin-left: 1px; }
  .abcd { font: bold 7px/6px "Liberation Sans", sans-serif; width: 8px; }
  .abtri { transform: scale(.75); margin: 7px 0 0 -2px; }
  .help { width: 12px; height: 12px; border: 1px solid #222; border-radius: 50%; text-align: center; line-height: 10px; font-size: 9px; font-weight: bold; margin: -13px 3px 0 0; }
  .tr { width: 26px; }
  .r2 .ar { margin-left: 3px; width: 17px; }
  .normal { width: 83px; }
  .aa { width: 177px; margin-left: 8px; letter-spacing: -.5px; }
  .lines { width: 100px; }
  .sel2 { margin-left: 9px; width: 20px; font-size: 9px; line-height: 10px; }
  .sel2 b { background: #111; color: #fff; }
  .cd { margin-left: 3px; width: 22px; } .bd { width: 134px; }
  .chk { margin-right: 3px; }
  .url { width: 275px; height: 19px; }
  .dest { margin-left: 8px; width: 41px; letter-spacing: -.35px; }
  .target { width: 67px; }
  .exp { margin: 12px 2px 0 0; }
  .split2 { background: linear-gradient(90deg, #666, #777 5px, #aaa 6px); padding-top: 303px; }
  .split2 span { display: grid; place-items: center; width: 6px; height: 43px; background: #aaa; }
  .library { background: #f1f1f1; display: flex; flex-direction: column; min-width: 0; }
  .colr, .lib { height: 18px; flex: none; }
  .library .bar .grip { margin-right: 5px; }
  .lib { padding-right: 5px; }
  .lib b { letter-spacing: -.33px; }
  .libsel { height: 27px; display: flex; align-items: center; padding-left: 3px; border-bottom: 1px solid #bbb; flex: none; }
  .lsel { width: 135px; margin-right: 6px; }
  .libsel span { width: 24px; }
  .empty { height: 17px; padding: 1px 0 0 3px; flex: none; }
  .preview { height: 79px; background: #bdbdbd; border: 1px solid #444; border-width: 1px 0 0 1px; margin: 1px 2px 0 1px; flex: none; }
  .list { flex: 1; display: grid; grid-template-columns: 173px 14px; margin-top: 5px; min-height: 0; }
  .listmain { background: #fdfdfd; }
  .lh { height: 15px; border-bottom: 1px solid #333; border-top: 1px solid #bbb; background: #f2f2f2; display: flex; line-height: 13px; letter-spacing: -.35px; }
  .lh span:first-child { width: 135px; padding-left: 2px; border-right: 1px solid #333; }
  .lh span + span { padding-left: 2px; }
  .lscroll { display: flex; flex-direction: column; align-items: center; background: #eee; padding-bottom: 2px; }
  .libfoot { height: 18px; display: flex; align-items: center; gap: 2px; padding: 1px 17px 1px 1px; flex: none; }
  .libfoot i { width: 23px; margin-left: 2px; }
  .gray { filter: grayscale(1); opacity: .5; margin: 0 1px 0 15px; }
  footer { height: 29px; background: linear-gradient(#ccc 0 1px, #777 1px, #4b4b4b 10px, #171717 14px, #111); display: flex; align-items: center; color: #fff; flex: none; padding: 1px 13px 0 11px; letter-spacing: -.35px; }
  .orb { margin-right: 19px; }
  .task { width: 141px; height: 26px; border: 1px solid #656565; border-radius: 3px; background: linear-gradient(#3b3b3b, #202020); display: flex; align-items: center; padding-left: 8px; gap: 3px; }
  .es { width: 13px; height: 13px; background: #3c84b7; line-height: 14px; text-align: center; margin-right: 5px; font-size: 9.500px; }
  .nero { width: 81px; height: 20px; background: #fff; color: #444; display: flex; flex-direction: column; align-items: center; line-height: 9px; letter-spacing: 0; }
  .nero em { font-size: 8px; color: #666; }
  .go { margin-left: 5px; }
  .tray { margin: 0 5px 0 12px; }
  time { width: 47px; }
</style>
